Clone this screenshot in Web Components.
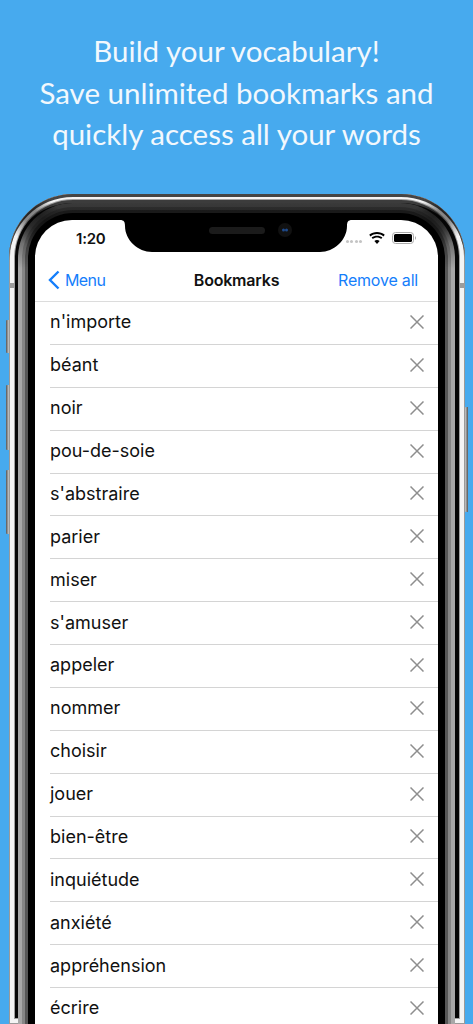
<!DOCTYPE html>
<html lang="fr">
<head>
<meta charset="utf-8">
<title>Bookmarks</title>
<style>
  html, body {
    margin: 0;
    padding: 0;
    height: 1024px;
    overflow: hidden;
    background: #47aaee;
    font-family: "Inter", "Liberation Sans", sans-serif;
  }
</style>
</head>
<body>

<promo-title>Build your vocabulary!<br>Save unlimited bookmarks and<br>quickly access all your words</promo-title>

<phone-frame>
  <status-bar></status-bar>
  <nav-bar></nav-bar>
  <word-row>n'importe</word-row>
  <word-row>béant</word-row>
  <word-row>noir</word-row>
  <word-row>pou-de-soie</word-row>
  <word-row>s'abstraire</word-row>
  <word-row>parier</word-row>
  <word-row>miser</word-row>
  <word-row>s'amuser</word-row>
  <word-row>appeler</word-row>
  <word-row>nommer</word-row>
  <word-row>choisir</word-row>
  <word-row>jouer</word-row>
  <word-row>bien-être</word-row>
  <word-row>inquiétude</word-row>
  <word-row>anxiété</word-row>
  <word-row>appréhension</word-row>
  <word-row>écrire</word-row>
</phone-frame>

<script>
  class PromoTitle extends HTMLElement {
    constructor() {
      super();
      this.attachShadow({mode: "open"}).innerHTML = `
        <style>
          :host {
            display: block;
            height: 194px;
            box-sizing: border-box;
            padding-top: 30px;
            text-align: center;
            color: #f2f8fd;
            font: 400 29.5px/41.5px "Lato", sans-serif;
          }
        </style>
        <slot></slot>`;
    }
  }

  class PhoneFrame extends HTMLElement {
    constructor() {
      super();
      this.attachShadow({mode: "open"}).innerHTML = `
        <style>
          :host {
            display: block;
            position: relative;
            width: 456px;
            height: 830px;
            margin-left: 9px;
            box-sizing: border-box;
            padding: 9px 10px 0 9px;
            border-radius: 64px 64px 0 0;
            background: #060606;
            box-shadow:
              inset 0 3px 0 0 #454545,
              inset 0 0 0 1px #9a9a9a,
              inset 0 0 0 5px #f4f4f4,
              inset 0 0 0 6px #a0a0a0,
              inset 0 9px 0 0 #3c3c3c;
          }
          .bezel {
            height: 821px;
            box-sizing: border-box;
            padding: 10px 10px 0;
            border-radius: 55px 55px 0 0;
            background: linear-gradient(180deg, #3a3a3a 0, #333 9px, #5a5a5a 30px, #a8a8a8 66px);
          }
          .well {
            height: 811px;
            box-sizing: border-box;
            padding: 7px 7px 0;
            border-radius: 45px 45px 0 0;
            background: #000;
            box-shadow: 0 0 0 3px rgba(0,0,0,.35), 0 0 0 6px rgba(0,0,0,.2);
          }
          .screen {
            position: relative;
            z-index: 1;
            height: 804px;
            overflow: hidden;
            background: #fff;
            border-radius: 37px 37px 0 0;
          }
          .corner {
            position: absolute;
            top: 0;
            width: 80px;
            height: 80px;
            border-radius: 64px 0 0 0;
            background: linear-gradient(45deg, transparent 28%, rgba(0,0,0,.45) 44%, rgba(0,0,0,.45) 56%, transparent 72%);
          }
          .corner.left { left: 0; }
          .corner.right { right: 0; transform: scaleX(-1); }
          .btn {
            position: absolute;
            left: -3px;
            width: 3px;
            background: linear-gradient(90deg, #555, #ccc);
            border-radius: 1px 0 0 1px;
          }
          .btn.right {
            left: auto;
            right: -3px;
            background: linear-gradient(90deg, #ccc, #555);
          }
          .band {
            position: absolute;
            top: 89px;
            width: 6px;
            height: 5px;
            background: #9c9c9c;
          }
        </style>
        <span class="btn" style="top:126px;height:33px"></span>
        <span class="btn" style="top:191px;height:65px"></span>
        <span class="btn" style="top:276px;height:64px"></span>
        <span class="btn right" style="top:213px;height:105px"></span>
        <span class="band" style="left:0"></span>
        <span class="band" style="right:0"></span>
        <div class="bezel">
          <div class="well">
            <div class="screen"><slot></slot></div>
          </div>
        </div>
        <span class="corner left"></span>
        <span class="corner right"></span>`;
    }
  }

  class StatusBar extends HTMLElement {
    constructor() {
      super();
      this.attachShadow({mode: "open"}).innerHTML = `
        <style>
          :host {
            display: flex;
            position: relative;
            align-items: center;
            height: 42px;
            box-sizing: border-box;
            padding: 0 22px 6px 41px;
            font: 600 15px "Inter", sans-serif;
            color: #111;
          }
          .notch {
            position: absolute;
            left: 85px;
            top: 0;
          }
          .dots {
            margin-left: auto;
            display: flex;
            gap: 1.5px;
            margin-top: 6px;
            margin-right: 7px;
          }
          .dots i {
            width: 3px;
            height: 3px;
            border-radius: 50%;
            background: #c4c4c4;
          }
          .time { letter-spacing: -0.2px; }
          svg.wifi { margin-right: 7px; }
        </style>
        <svg class="notch" width="232" height="32" viewBox="0 0 232 32">
          <path d="M0 0H232C228 0 227 2 227 6C227 20 214 32 200 32H32C18 32 5 20 5 6C5 2 4 0 0 0Z" fill="#000"/>
          <rect x="89" y="7" width="56" height="7" rx="3.5" fill="#1b1b1b"/>
          <circle cx="165" cy="10" r="7" fill="#111"/>
          <circle cx="163.5" cy="10" r="1.5" fill="#1e4a8c"/>
          <circle cx="166.5" cy="10" r="1.5" fill="#1e4a8c"/>
        </svg>
        <span class="time">1:20</span>
        <span class="dots"><i></i><i></i><i></i><i></i></span>
        <svg class="wifi" width="16" height="12" viewBox="0 0 16 12">
          <path d="M8 12L5.4 8.9C6.9 7.7 9.1 7.7 10.6 8.9Z" fill="#000"/>
          <path d="M3.9 7.1C6.3 5.1 9.7 5.1 12.1 7.1L13.4 5.6C10.3 3 5.7 3 2.6 5.6Z" fill="#000"/>
          <path d="M1.6 4.4C5.3 1.2 10.7 1.2 14.4 4.4L15.8 2.8C11.3 -0.9 4.7 -0.9 0.2 2.8Z" fill="#000"/>
        </svg>
        <svg width="24" height="12" viewBox="0 0 24 12">
          <rect x="0.5" y="0.5" width="21" height="11" rx="3" fill="none" stroke="#aaa"/>
          <rect x="2" y="2" width="18" height="8" rx="1.5" fill="#000"/>
          <path d="M23 4.2C23.8 4.5 24 5.2 24 6S23.8 7.5 23 7.8Z" fill="#aaa"/>
        </svg>`;
    }
  }

  class NavBar extends HTMLElement {
    constructor() {
      super();
      this.attachShadow({mode: "open"}).innerHTML = `
        <style>
          :host {
            display: grid;
            grid-template-columns: 1fr auto 1fr;
            align-items: center;
            height: 40px;
            box-sizing: border-box;
            padding: 0 20px 4px;
            border-bottom: 1px solid #dcdcdc;
            font: 400 16px "Inter", sans-serif;
            letter-spacing: -0.2px;
            color: #147efb;
          }
          .back {
            display: flex;
            align-items: center;
            gap: 5px;
            margin-left: -7px;
            letter-spacing: -0.6px;
          }
          .title {
            font-weight: 600;
            color: #111;
          }
          .action { text-align: right; }
        </style>
        <span class="back">
          <svg width="12" height="20" viewBox="0 0 12 20">
            <path d="M10.5 1.5L2 10L10.5 18.5" fill="none" stroke="#147efb" stroke-width="2.4"/>
          </svg>
          Menu
        </span>
        <span class="title">Bookmarks</span>
        <span class="action">Remove all</span>`;
    }
  }

  class WordRow extends HTMLElement {
    constructor() {
      super();
      this.attachShadow({mode: "open"}).innerHTML = `
        <style>
          :host {
            display: block;
            margin-left: 15px;
            height: 42.875px;
            box-sizing: border-box;
            padding-bottom: 2px;
            border-bottom: 1px solid #d4d4d4;
            font: 400 18px "Inter", sans-serif;
            color: #111;
          }
          .row {
            display: flex;
            align-items: center;
            justify-content: space-between;
            height: 100%;
            padding-right: 14px;
          }
        </style>
        <div class="row">
          <slot></slot>
          <svg width="14" height="14" viewBox="0 0 14 14">
            <path d="M0.5 0.5L13.5 13.5M13.5 0.5L0.5 13.5" fill="none" stroke="#8e8e8e" stroke-width="1.5"/>
          </svg>
        </div>`;
    }
  }

  customElements.define("promo-title", PromoTitle);
  customElements.define("phone-frame", PhoneFrame);
  customElements.define("status-bar", StatusBar);
  customElements.define("nav-bar", NavBar);
  customElements.define("word-row", WordRow);
</script>
</body>
</html>
